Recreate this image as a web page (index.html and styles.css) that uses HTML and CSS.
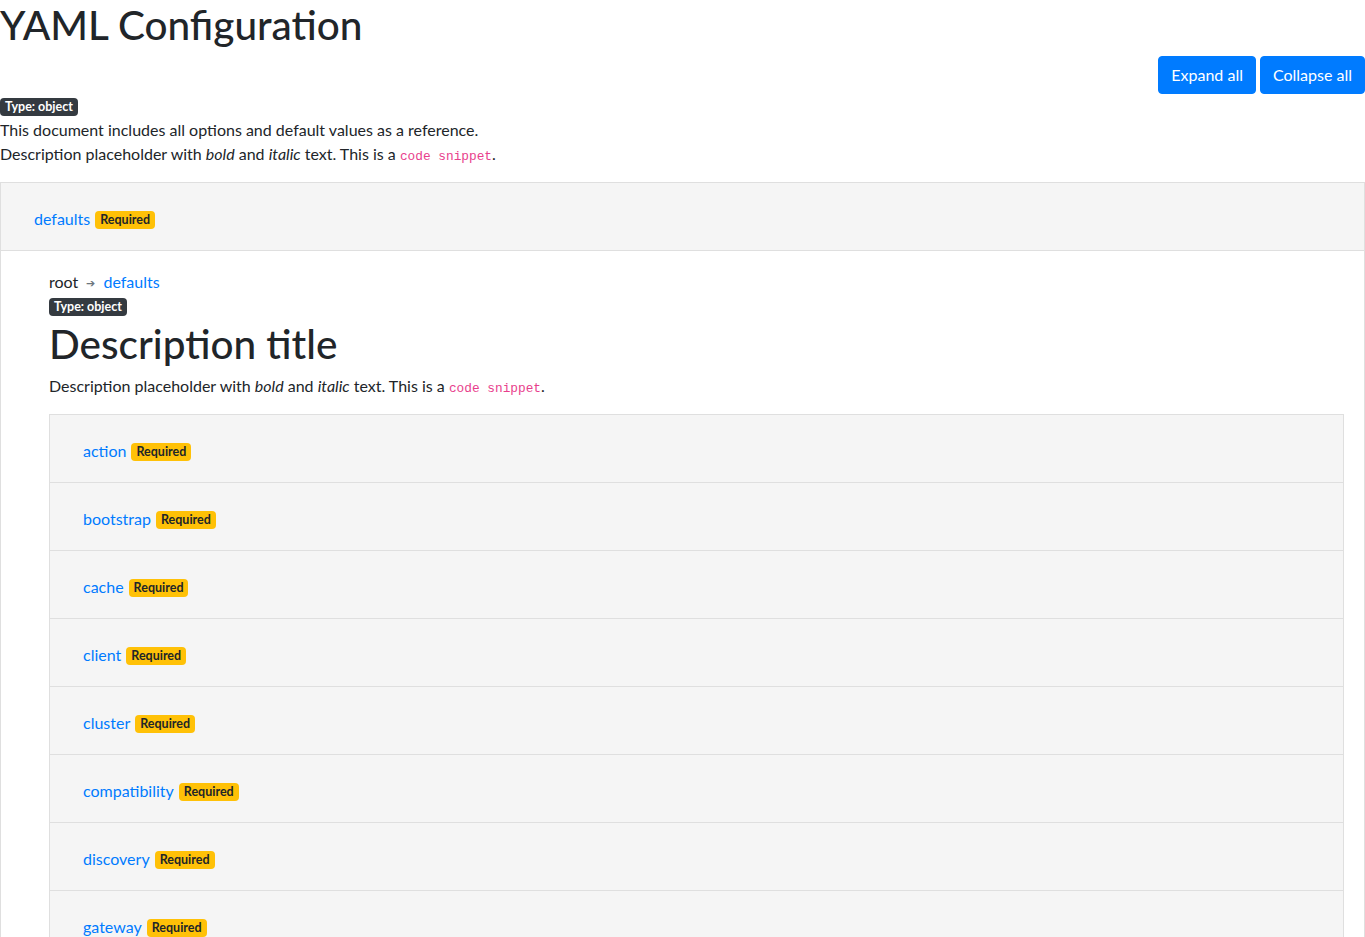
FILE: index.html
```html
<!DOCTYPE html>
<html lang="en">
<head>
<meta charset="utf-8">
<title>YAML Configuration</title>
<link rel="stylesheet" href="styles.css">
</head>
<body>
<h1 class="page-title">YAML Configuration</h1>
<div class="toolbar">
  <button class="btn btn-primary">Expand all</button>
  <button class="btn btn-primary">Collapse all</button>
</div>
<div class="type-line"><span class="badge badge-dark">Type: object</span></div>
<div class="desc-line">This document includes all options and default values as a reference.</div>
<div class="desc-line">Description placeholder with <em>bold</em> and <em>italic</em> text. This is a <code>code snippet</code>.</div>

<div class="accordion outer">
  <div class="card">
    <div class="card-header">
      <span class="prop-name">defaults</span><span class="badge badge-warning">Required</span>
    </div>
    <div class="card-body">
      <div class="breadcrumbs">root <span class="arrow">&#x2794;</span> <span class="crumb-link">defaults</span></div>
      <div class="type-line"><span class="badge badge-dark">Type: object</span></div>
      <h1 class="desc-title">Description title</h1>
      <p class="desc-text">Description placeholder with <em>bold</em> and <em>italic</em> text. This is a <code>code snippet</code>.</p>

      <div class="accordion inner">
        <div class="item"><span class="prop-name">action</span><span class="badge badge-warning">Required</span></div>
        <div class="item"><span class="prop-name">bootstrap</span><span class="badge badge-warning">Required</span></div>
        <div class="item"><span class="prop-name">cache</span><span class="badge badge-warning">Required</span></div>
        <div class="item"><span class="prop-name">client</span><span class="badge badge-warning">Required</span></div>
        <div class="item"><span class="prop-name">cluster</span><span class="badge badge-warning">Required</span></div>
        <div class="item"><span class="prop-name">compatibility</span><span class="badge badge-warning">Required</span></div>
        <div class="item"><span class="prop-name">discovery</span><span class="badge badge-warning">Required</span></div>
        <div class="item"><span class="prop-name">gateway</span><span class="badge badge-warning">Required</span></div>
        <div class="item"><span class="prop-name">http</span><span class="badge badge-warning">Required</span></div>
        <div class="item"><span class="prop-name">indices</span><span class="badge badge-warning">Required</span></div>
      </div>
    </div>
  </div>
</div>
</body>
</html>
```

FILE: styles.css
```css
html { scrollbar-width: none; }
html::-webkit-scrollbar { display: none; }
body {
  margin: 0;
  font-family: "Lato", "Noto Sans", "Liberation Sans", sans-serif;
  font-size: 16px;
  line-height: 24px;
  color: #212529;
  background: #fff;
}
em { font-style: italic; }
code {
  font-family: "Liberation Mono", "DejaVu Sans Mono", monospace;
  font-size: 12.8px;
  line-height: 1;
  color: #e83e8c;
}
.page-title {
  margin: 0 0 8px 0;
  height: 48px;
  box-sizing: border-box;
  padding-top: 2px;
  font-size: 40.5px;
  line-height: 46px;
  font-weight: 500;
}
.toolbar {
  display: flex;
  justify-content: flex-end;
  gap: 4px;
  height: 38px;
}
.btn {
  font-family: inherit;
  font-size: 16px;
  line-height: 24px;
  padding: 6px 12px;
  border: 1px solid #007bff;
  border-radius: 4px;
  background: #007bff;
  color: #fff;
}
.type-line {
  height: 24px;
  display: flex;
  align-items: center;
  padding-top: 2px;
  box-sizing: border-box;
}
.badge {
  display: inline-block;
  font-size: 12.5px;
  font-weight: 700;
  line-height: 12px;
  padding: 3px 5px;
  border-radius: 4px;
}
.badge-dark { background: #343a40; color: #fff; }
.badge-warning {
  background: #ffc107;
  color: #212529;
  margin-left: 5px;
  margin-top: 2px;
}
.desc-line { height: 24px; }
.accordion { margin-top: 16px; }
.card {
  border: 1px solid #dfdfdf;
}
.card-header {
  height: 68px;
  box-sizing: border-box;
  padding: 4px 33px 0;
  display: flex;
  align-items: center;
  background: #f5f5f5;
  border-bottom: 1px solid #dfdfdf;
}
.prop-name { color: #007bff; }
.card-body {
  padding: 19px 20px 20px 48px;
}
.breadcrumbs { height: 24px; }
.arrow {
  color: #6c757d;
  font-size: 11px;
  margin: 0 4px;
  position: relative;
  top: -1px;
}
.crumb-link { color: #007bff; }
.desc-title {
  margin: 0 0 8px 0;
  height: 48px;
  box-sizing: border-box;
  padding-top: 3px;
  font-size: 40.5px;
  line-height: 45px;
  font-weight: 500;
}
.desc-text { margin: 0 0 16px 0; height: 24px; }
.accordion.inner {
  margin-top: 0;
  border: 1px solid #dfdfdf;
}
.item {
  height: 67px;
  box-sizing: border-box;
  padding: 4px 33px 0;
  display: flex;
  align-items: center;
  background: #f5f5f5;
}
.item + .item { border-top: 1px solid #dfdfdf; height: 68px; }
```
